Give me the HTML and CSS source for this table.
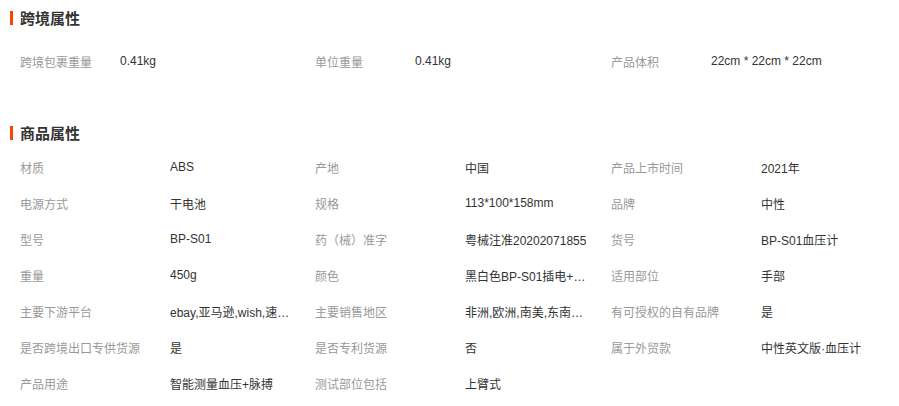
FILE: index.html
```html
<!DOCTYPE html>
<html lang="zh-CN">
<head>
  <meta charset="UTF-8" />
  <title>商品属性</title>
  <link rel="stylesheet" href="styles.css">
</head>
<body>
  <div class="section">
    <h2 class="title">跨境属性</h2>
    <div class="attrs attrs-cross">
      <div class="attr"><span class="name">跨境包裹重量</span><span class="value">0.41kg</span></div>
      <div class="attr"><span class="name">单位重量</span><span class="value">0.41kg</span></div>
      <div class="attr"><span class="name">产品体积</span><span class="value">22cm * 22cm * 22cm</span></div>
    </div>
  </div>

  <div class="section section-goods">
    <h2 class="title">商品属性</h2>
    <div class="attrs attrs-goods">
      <div class="attr"><span class="name">材质</span><span class="value">ABS</span></div>
      <div class="attr"><span class="name">产地</span><span class="value">中国</span></div>
      <div class="attr"><span class="name">产品上市时间</span><span class="value">2021年</span></div>

      <div class="attr"><span class="name">电源方式</span><span class="value">干电池</span></div>
      <div class="attr"><span class="name">规格</span><span class="value">113*100*158mm</span></div>
      <div class="attr"><span class="name">品牌</span><span class="value">中性</span></div>

      <div class="attr"><span class="name">型号</span><span class="value">BP-S01</span></div>
      <div class="attr"><span class="name">药（械）准字</span><span class="value">粤械注准20202071855</span></div>
      <div class="attr"><span class="name">货号</span><span class="value">BP-S01血压计</span></div>

      <div class="attr"><span class="name">重量</span><span class="value">450g</span></div>
      <div class="attr"><span class="name">颜色</span><span class="value">黑白色BP-S01插电+USB线</span></div>
      <div class="attr"><span class="name">适用部位</span><span class="value">手部</span></div>

      <div class="attr"><span class="name">主要下游平台</span><span class="value">ebay,亚马逊,wish,速卖通,独立站</span></div>
      <div class="attr"><span class="name">主要销售地区</span><span class="value">非洲,欧洲,南美,东南亚,北美</span></div>
      <div class="attr"><span class="name">有可授权的自有品牌</span><span class="value">是</span></div>

      <div class="attr"><span class="name">是否跨境出口专供货源</span><span class="value">是</span></div>
      <div class="attr"><span class="name">是否专利货源</span><span class="value">否</span></div>
      <div class="attr"><span class="name">属于外贸款</span><span class="value">中性英文版·血压计</span></div>

      <div class="attr"><span class="name">产品用途</span><span class="value">智能测量血压+脉搏</span></div>
      <div class="attr"><span class="name">测试部位包括</span><span class="value">上臂式</span></div>
    </div>
  </div>
</body>
</html>
```

FILE: styles.css
```css
body {
  margin: 0;
  padding-top: 0;
  font-family: "Liberation Sans", "Noto Sans CJK SC", sans-serif;
  font-size: 12px;
  color: #333;
  background: #fff;
}
.title {
  display: flex;
  align-items: center;
  height: 35px;
  margin: 0;
  padding-left: 10px;
  font-size: 15px;
  font-weight: bold;
  color: #333;
}
.title::before {
  content: "";
  width: 3px;
  height: 14px;
  margin-right: 7px;
  background: #ff4000;
}
.section-goods {
  margin-top: 36px;
}
.attrs {
  display: grid;
  grid-template-columns: 295px 296px 1fr;
  padding-left: 20px;
}
.attrs-cross {
  margin-top: 8px;
}
.attrs-goods {
  margin-top: -1px;
}
.attr {
  display: flex;
  align-items: center;
  height: 36px;
}
.name {
  flex: none;
  width: 100px;
  color: #999;
  white-space: nowrap;
}
.attrs-goods .name {
  width: 150px;
}
.value {
  max-width: 126px;
  overflow: hidden;
  text-overflow: ellipsis;
  white-space: nowrap;
}
.attrs-cross .value {
  max-width: none;
}
```
